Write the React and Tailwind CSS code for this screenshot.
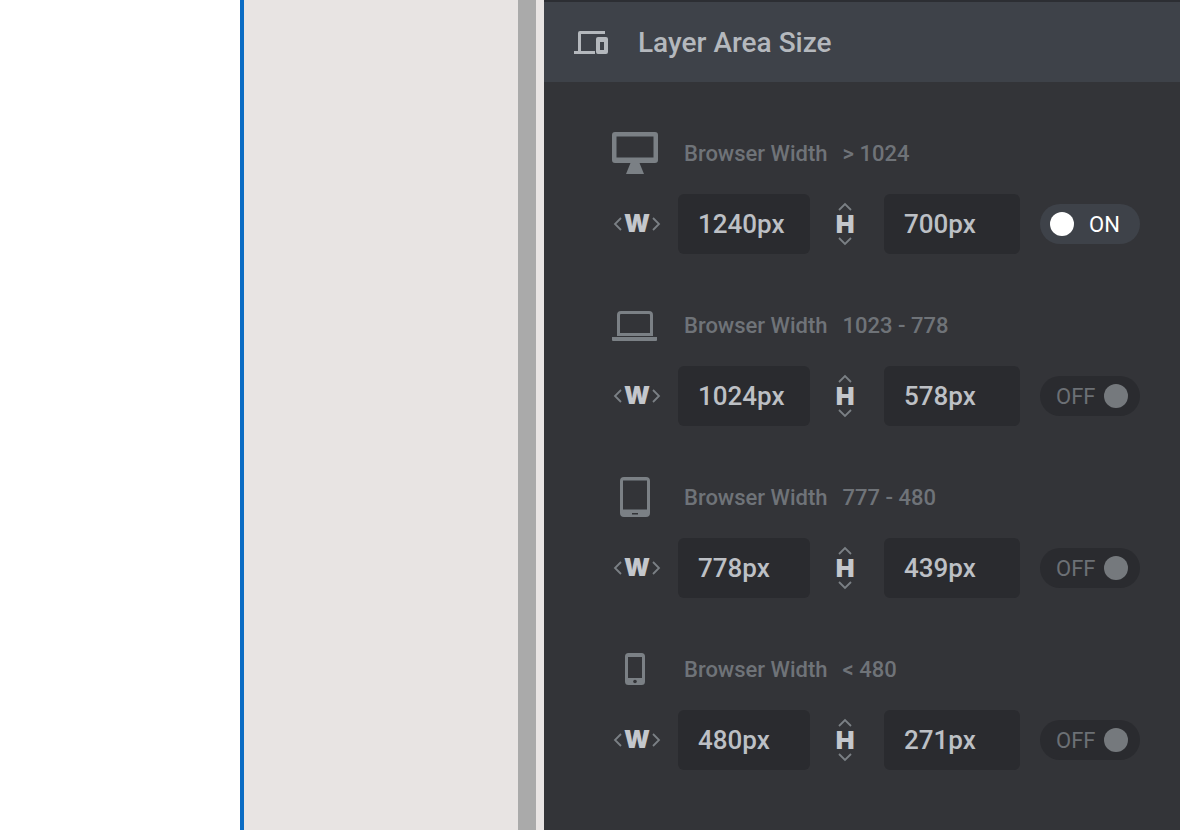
import React from 'react';

const rows = [
  { icon: 'desktop', range: '> 1024', width: '1240px', height: '700px', on: true },
  { icon: 'laptop', range: '1023 - 778', width: '1024px', height: '578px', on: false },
  { icon: 'tablet', range: '777 - 480', width: '778px', height: '439px', on: false },
  { icon: 'phone', range: '< 480', width: '480px', height: '271px', on: false },
];

function DeviceIcon({ type }) {
  if (type === 'desktop') {
    return (
      <svg width="46" height="42" viewBox="0 0 46 42" fill="#7b8085">
        <path fillRule="evenodd" d="M3 0h40a3 3 0 0 1 3 3v25a3 3 0 0 1-3 3H3a3 3 0 0 1-3-3V3a3 3 0 0 1 3-3zm1.500 4.500v21h37v-21z" />
        <path d="M18.500 31h9l4.500 11H14z" />
      </svg>
    );
  }
  if (type === 'laptop') {
    return (
      <svg width="46" height="32" viewBox="0 0 46 32" fill="#7b8085">
        <path fillRule="evenodd" d="M9 2h28a4 4 0 0 1 4 4v20h-3V6a1 1 0 0 0-1-1H9a1 1 0 0 0-1 1v20H5V6a4 4 0 0 1 4-4z" />
        <path d="M5 24h36v3H5z" />
        <path d="M0 28h45v3a1 1 0 0 1-1 1H1a1 1 0 0 1-1-1z" />
      </svg>
    );
  }
  if (type === 'tablet') {
    return (
      <svg width="30" height="40" viewBox="0 0 30 40" fill="#7b8085">
        <path fillRule="evenodd" d="M4 0h22a4 4 0 0 1 4 4v32a4 4 0 0 1-4 4H4a4 4 0 0 1-4-4V4a4 4 0 0 1 4-4zm-1 3.500v29h24v-29zm9 32.500v1.500h6V36z" />
      </svg>
    );
  }
  return (
    <svg width="20" height="32" viewBox="0 0 20 32" fill="#7b8085">
      <path fillRule="evenodd" d="M3.500 0h13A3.500 3.500 0 0 1 20 3.500v25a3.500 3.500 0 0 1-3.500 3.500h-13A3.500 3.500 0 0 1 0 28.500v-25A3.500 3.500 0 0 1 3.500 0zM3 4v21h14V4z" />
      <circle cx="10" cy="28.500" r="1.800" fill="#333438" />
    </svg>
  );
}

function SizeInput({ value, className }) {
  return (
    <div className={`h-[60px] rounded-md bg-[#2a2b2f] flex items-center pl-5 pt-[1px] text-[26px] font-medium text-[#bdc0c5] ${className}`}>
      {value}
    </div>
  );
}

function Toggle({ on }) {
  if (on) {
    return (
      <div className="ml-5 w-[100px] h-10 rounded-full bg-[#3e4249] flex items-center pl-[10px]">
        <div className="w-6 h-6 rounded-full bg-white" />
        <span className="ml-[15px] pt-[1px] text-[22px] text-white">ON</span>
      </div>
    );
  }
  return (
    <div className="ml-5 w-[100px] h-10 rounded-full bg-[#2a2b2f] flex items-center pl-4">
      <span className="pt-[1px] text-[22px] text-[#6c7075]">OFF</span>
      <div className="ml-[9px] w-6 h-6 rounded-full bg-[#75797d]" />
    </div>
  );
}

function DeviceRow({ row }) {
  return (
    <div className="mb-[51px]">
      <div className="h-10 flex items-center">
        <div className="w-[46px] flex justify-center">
          <DeviceIcon type={row.icon} />
        </div>
        <span className="ml-[26px] text-[22px] font-medium text-[#6f7378]">Browser Width</span>
        <span className="ml-[15px] text-[22px] font-medium text-[#6f7378]">{row.range}</span>
      </div>
      <div className="mt-[21px] flex items-center">
        <div className="w-[66px] flex items-center">
          <svg className="ml-[1px]" width="9" height="16" viewBox="0 0 9 16" fill="none" stroke="#7b8085" strokeWidth="1.800">
            <path d="M8 2 2 8l6 6" />
          </svg>
          <span className="w-[30px] text-center font-['Inter',sans-serif] text-[24px] leading-none font-black text-[#c4c7cc]">W</span>
          <svg width="9" height="16" viewBox="0 0 9 16" fill="none" stroke="#7b8085" strokeWidth="1.800">
            <path d="M1 2l6 6-6 6" />
          </svg>
        </div>
        <SizeInput value={row.width} className="w-[132px]" />
        <div className="w-[74px] pr-1 flex flex-col items-center">
          <svg width="16" height="9" viewBox="0 0 16 9" fill="none" stroke="#7b8085" strokeWidth="1.800">
            <path d="M2 8l6-6 6 6" />
          </svg>
          <span className="font-['Inter',sans-serif] text-[25px] leading-[26px] font-black text-[#c4c7cc]">H</span>
          <svg width="16" height="9" viewBox="0 0 16 9" fill="none" stroke="#7b8085" strokeWidth="1.800">
            <path d="M2 1l6 6 6-6" />
          </svg>
        </div>
        <SizeInput value={row.height} className="w-[136px]" />
        <Toggle on={row.on} />
      </div>
    </div>
  );
}

export default function App() {
  return (
    <div className="flex h-[830px] overflow-hidden font-['Roboto',sans-serif]">
      <div className="w-[240px] bg-white" />
      <div className="w-[4px] bg-[#0b6cc4]" />
      <div className="w-[274px] bg-[#e8e4e3]" />
      <div className="w-[18px] bg-[#aaaaaa]" />
      <div className="w-[8px] bg-[#e8e4e3]" />
      <div className="flex-1 bg-[#333438]">
        <div className="h-[82px] bg-[#3e4249] border-t-2 border-[#2c2e33] flex items-center pl-[29px]">
          <svg width="35" height="23" viewBox="0 0 35 23" fill="#b4b8bd">
            <path d="M7 0h25v3H8v17h14v3H1v-3h4V2a2 2 0 0 1 2-2z" />
            <path fillRule="evenodd" d="M25 6h8a2 2 0 0 1 2 2v13a2 2 0 0 1-2 2h-8a2 2 0 0 1-2-2V8a2 2 0 0 1 2-2zm2 5v8h4v-8z" />
          </svg>
          <span className="ml-[30px] pt-[2px] text-[28px] font-medium text-[#b4b8bd]">Layer Area Size</span>
        </div>
        <div className="pt-[51px] pl-[68px]">
          {rows.map(row => (
            <DeviceRow key={row.icon} row={row} />
          ))}
        </div>
      </div>
    </div>
  );
}
